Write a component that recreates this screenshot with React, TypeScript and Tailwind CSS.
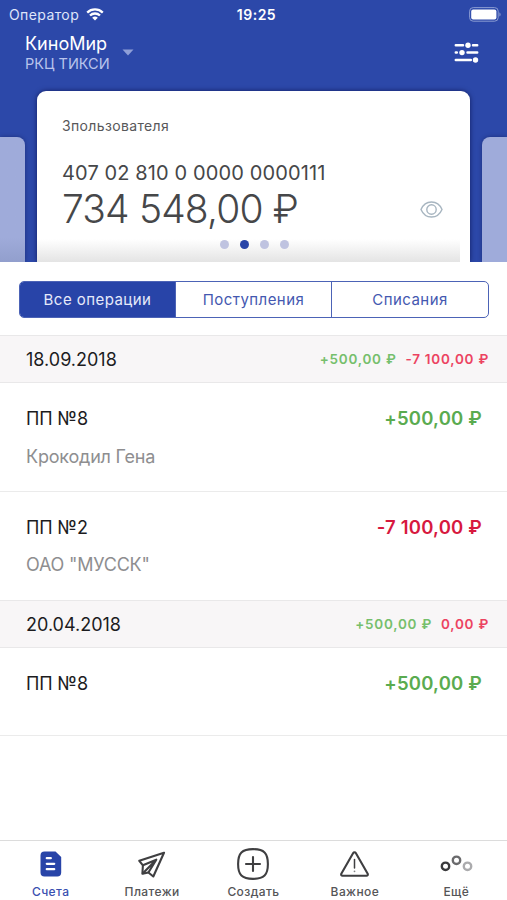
import type { ReactNode } from 'react';
import { clsx } from 'clsx';

interface Operation {
  title: string;
  contractor?: string;
  amount: string;
  isIncome: boolean;
}

interface OperationGroup {
  date: string;
  income: string;
  outcome: string;
  operations: Operation[];
}

interface Tab {
  label: string;
  icon: ReactNode;
  isActive?: boolean;
}

const GROUPS: OperationGroup[] = [
  {
    date: '18.09.2018',
    income: '+500,00 ₽',
    outcome: '-7 100,00 ₽',
    operations: [
      { title: 'ПП №8', contractor: 'Крокодил Гена', amount: '+500,00 ₽', isIncome: true },
      { title: 'ПП №2', contractor: 'ОАО "МУССК"', amount: '-7 100,00 ₽', isIncome: false },
    ],
  },
  {
    date: '20.04.2018',
    income: '+500,00 ₽',
    outcome: '0,00 ₽',
    operations: [{ title: 'ПП №8', amount: '+500,00 ₽', isIncome: true }],
  },
];

const FILTERS = ['Все операции', 'Поступления', 'Списания'];

const TABS: Tab[] = [
  { label: 'Счета', icon: <AccountsIcon />, isActive: true },
  { label: 'Платежи', icon: <PlaneIcon /> },
  { label: 'Создать', icon: <CreateIcon /> },
  { label: 'Важное', icon: <WarningIcon /> },
  { label: 'Ещё', icon: <MoreIcon /> },
];

function WifiIcon() {
  return (
    <svg width="18" height="13" viewBox="0 0 18 13" fill="none" stroke="white" strokeWidth="2.3">
      <path d="M1.2 4.6a11.2 11.2 0 0 1 15.6 0" />
      <path d="M4 7.5a7.2 7.2 0 0 1 10 0" />
      <path d="M9 12.6 6.2 9.8a4 4 0 0 1 5.6 0z" fill="white" stroke="none" />
    </svg>
  );
}

function BatteryIcon() {
  return (
    <svg width="33" height="15" viewBox="0 0 33 15">
      <rect x="0.6" y="0.6" width="28.6" height="13.6" rx="3.6" fill="none" stroke="#8a9bd2" />
      <rect x="2.2" y="2.4" width="25.2" height="10" rx="2" fill="white" />
      <path d="M30.4 5.2c1.6.7 1.6 3.7 0 4.4z" fill="#8a9bd2" />
    </svg>
  );
}

function SettingsIcon() {
  return (
    <svg width="25" height="21" viewBox="0 0 25 21" fill="white" stroke="white" strokeWidth="2.5" strokeLinecap="round">
      <path d="M1.8 3.2h7.2M19 3.2h4.2M1.8 10.6h1M13.5 10.6h9.7M1.8 18h15" />
      <g stroke="none">
        <circle cx="14" cy="3.2" r="2.7" />
        <circle cx="8" cy="10.6" r="2.7" />
        <circle cx="21.5" cy="18" r="2.7" />
      </g>
    </svg>
  );
}

function EyeIcon() {
  return (
    <svg width="23" height="17" viewBox="0 0 23 17" fill="none" stroke="#a7b5c0" strokeWidth="1.4">
      <path d="M1 8.5C3 3.8 7 1 11.5 1S20 3.8 22 8.5C20 13.2 16 16 11.5 16S3 13.2 1 8.5z" />
      <circle cx="11.5" cy="8.5" r="4.7" />
    </svg>
  );
}

function AccountsIcon() {
  return (
    <svg width="22" height="26" viewBox="0 0 22 26">
      <path d="M4.5 0.5H15.5L21.2 6V21.5a4 4 0 0 1-4 4H4.5a4 4 0 0 1-4-4V4.5a4 4 0 0 1 4-4z" fill="#2844a8" />
      <path d="M6.8 7.2h4M6.8 12.8h7.4M6.8 18.2h7.4" stroke="white" strokeWidth="2.3" strokeLinecap="round" />
    </svg>
  );
}

function PlaneIcon() {
  return (
    <svg width="28" height="27" viewBox="0 0 28 27" fill="none" stroke="#3f3f41" strokeWidth="2.1" strokeLinejoin="round">
      <path d="M26 1.7 1.3 9.8l3.6 4.5-.5 8.4 6-1.2 4.9 4z" />
      <path d="M4.9 14.3 18.3 8.700 4.4 22.700M18.300 8.700 10.400 21.500" />
    </svg>
  );
}

function CreateIcon() {
  return (
    <svg width="32" height="32" viewBox="0 0 32 32" fill="none" stroke="#3f3f41" strokeWidth="2.1" strokeLinecap="round">
      <path d="M16 1.1C27 1.1 30.9 5 30.9 16S27 30.9 16 30.9 1.1 27 1.1 16 5 1.1 16 1.1z" />
      <path d="M16 9v14M9 16h14" />
    </svg>
  );
}

function WarningIcon() {
  return (
    <svg width="29" height="26" viewBox="0 0 29 26" fill="none" stroke="#3f3f41" strokeWidth="2.1" strokeLinejoin="round">
      <path d="M13.2 2.1a1.5 1.5 0 0 1 2.6 0L27.7 22.8a1.4 1.4 0 0 1-1.2 2H2.5a1.4 1.4 0 0 1-1.2-2z" />
      <path d="M14.5 8.5v8.5" strokeWidth="1.5" strokeLinecap="round" />
      <circle cx="14.5" cy="20.3" r="0.9" fill="#858587" stroke="none" />
    </svg>
  );
}

function MoreIcon() {
  return (
    <svg width="33" height="18" viewBox="0 0 33 18" fill="none" strokeWidth="2.4">
      <circle cx="5.5" cy="11.3" r="3.7" stroke="#3a3a3c" />
      <circle cx="16.5" cy="5.3" r="3.7" stroke="#6a6a6c" />
      <circle cx="27.5" cy="11.3" r="3.7" stroke="#ababad" />
    </svg>
  );
}

function Header() {
  return (
    <header className="h-[262px] shrink-0 flex flex-col bg-[#2c48a9] overflow-hidden">
      <div className="h-7 shrink-0 grid grid-cols-3 items-center pl-[9px] pr-[5px] text-white">
        <div className="flex items-center gap-[7px]">
          <span className="text-[14px] tracking-[0.4px] text-[#dfe5fa]">Оператор</span>
          <WifiIcon />
        </div>
        <span className="pl-0.5 text-center text-[14px] font-semibold tracking-[0.5px]">19:25</span>
        <div className="flex justify-end">
          <BatteryIcon />
        </div>
      </div>

      <div className="h-[63px] shrink-0 flex justify-between pl-[25px] pr-7">
        <div className="flex">
          <div className="pt-1.5">
            <div className="text-[18px] leading-5 text-white">КиноМир</div>
            <div className="text-[14.5px] leading-5 text-[#b9c4ec]">РКЦ ТИКСИ</div>
          </div>
          <svg className="mt-[21px] ml-3" width="12" height="7" viewBox="0 0 12 7">
            <path d="M0.5 0.5h11L6 6.5z" fill="#8f9fd8" />
          </svg>
        </div>
        <div className="pt-[14px]">
          <SettingsIcon />
        </div>
      </div>

      <div className="flex-1 flex items-end justify-between">
        <div className="w-[25px] h-[125px] rounded-tr-lg bg-linear-to-b from-[#9fabda] from-80% to-[#929fcd] shadow-[0_0_4px_rgba(0,0,40,0.35)]" />
        <AccountCard />
        <div className="w-[25px] h-[125px] rounded-tl-lg bg-[#9fabda] shadow-[0_0_4px_rgba(0,0,40,0.35)]" />
      </div>
    </header>
  );
}

function AccountCard() {
  return (
    <div className="w-[433px] h-[171px] rounded-t-[9px] bg-white text-[#464749] shadow-[0_0_5px_rgba(0,0,50,0.6)]">
      <div className="h-[148px] pl-[25px] pr-[27px]">
        <div className="pt-[25px] text-[14px] leading-5 tracking-[0.35px] text-[#58585a]">Зпользователя</div>
        <div className="pt-[25px] text-[20px] leading-6 tracking-[0.12px]">407 02 810 0 0000 0000111</div>
        <div className="flex items-center justify-between">
          <span className="text-[39px] leading-[48px] font-light tracking-[-0.85px]">734 548,00 ₽</span>
          <EyeIcon />
        </div>
      </div>
      <div className="w-[423px] h-[23px] pt-px flex justify-center gap-[11px] pl-[11px] bg-linear-to-b from-white to-[#e4e4e4]">
        {[0, 1, 2, 3].map((dot) => (
          <span key={dot} className={clsx('size-[9px] rounded-full', dot === 1 ? 'bg-[#2844a8]' : 'bg-[#bfc3e0]')} />
        ))}
      </div>
    </div>
  );
}

function FilterTabs() {
  return (
    <div className="h-[73px] pl-[19px] pr-[18px] pt-[19px]">
      <div className="h-[37px] grid grid-cols-3 overflow-hidden rounded-[5px] border border-[#4c63b6] divide-x divide-[#4c63b6]">
        {FILTERS.map((filter, index) => (
          <button
            key={filter}
            className={clsx(
              'pt-0.5 text-[15px] tracking-[0.45px]',
              index === 0 ? 'bg-[#2844a8] text-[#e6eafa]' : 'text-[#4458b0]'
            )}
          >
            {filter}
          </button>
        ))}
      </div>
    </div>
  );
}

function GroupSection({ group }: { group: OperationGroup }) {
  return (
    <section>
      <div className="h-12 flex items-center justify-between pl-[26px] pr-[18px] border-y border-[#e9e8e9] bg-[#f8f6f7]">
        <span className="text-[18px] text-[#1c1c1e]">{group.date}</span>
        <div className="flex gap-[9px] text-[13.5px] font-semibold tracking-[0.75px]">
          <span className="text-[#76bf6c]">{group.income}</span>
          <span className="text-[#ec4361]">{group.outcome}</span>
        </div>
      </div>
      <div className="divide-y divide-[#ebebeb]">
        {group.operations.map((operation) => (
          <div
            key={operation.title}
            className={clsx(
              'pl-[26px] pr-[25px] pt-6',
              operation.contractor ? 'h-[108.5px]' : 'h-[88px] border-b border-[#ebebeb]'
            )}
          >
            <div className="flex justify-between leading-6">
              <span className="text-[18px] tracking-[-0.15px] text-[#1c1c1e]">{operation.title}</span>
              <span
                className={clsx(
                  'text-[18.5px] leading-[23px] font-semibold tracking-[0.2px]',
                  operation.isIncome ? 'text-[#5aab50]' : 'text-[#d7193f]'
                )}
              >
                {operation.amount}
              </span>
            </div>
            {operation.contractor && (
              <div className="pt-[13.5px] text-[18px] leading-6 tracking-[-0.2px] text-[#8e8e90]">
                {operation.contractor}
              </div>
            )}
          </div>
        ))}
      </div>
    </section>
  );
}

function TabBar() {
  return (
    <nav className="h-[60px] shrink-0 grid grid-cols-5 border-t border-[#dcdcdc] bg-white">
      {TABS.map((tab) => (
        <div key={tab.label} className="flex flex-col items-center">
          <div className="h-[43px] pt-[3px] flex items-center">{tab.icon}</div>
          <span
            className={clsx(
              'text-[12px] leading-4 font-medium tracking-[0.4px]',
              tab.isActive ? 'text-[#3a50b0]' : 'text-[#555557]'
            )}
          >
            {tab.label}
          </span>
        </div>
      ))}
    </nav>
  );
}

export default function App() {
  return (
    <div className="w-[507px] h-[900px] flex flex-col overflow-hidden bg-white font-['Inter',sans-serif]">
      <Header />
      <main className="flex-1">
        <FilterTabs />
        {GROUPS.map((group) => (
          <GroupSection key={group.date} group={group} />
        ))}
      </main>
      <TabBar />
    </div>
  );
}
